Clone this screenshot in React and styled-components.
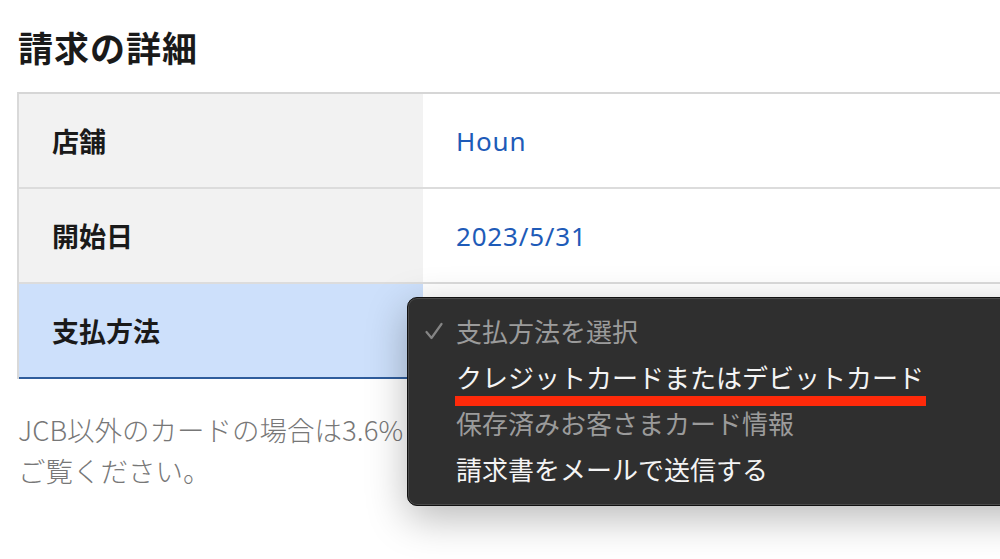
import React from 'react'
import styled, { createGlobalStyle } from 'styled-components'

const GlobalStyle = createGlobalStyle`
  html, body {
    margin: 0;
    padding: 0;
    background: #fff;
    overflow: hidden;
  }
  body {
    font-family: 'Noto Sans', 'Noto Sans CJK JP', sans-serif;
  }
`

const rows = [
  { id: 1, label: '店舗', value: 'Houn' },
  { id: 2, label: '開始日', value: '2023/5/31' },
  { id: 3, label: '支払方法', value: '', active: true },
]

const options = [
  { id: 1, text: '支払方法を選択', checked: true, muted: true },
  { id: 2, text: 'クレジットカードまたはデビットカード', marked: true },
  { id: 3, text: '保存済みお客さまカード情報', muted: true },
  { id: 4, text: '請求書をメールで送信する' },
]

const App = () => {
  return (
    <>
      <GlobalStyle />
      <Page>
        <Title>請求の詳細</Title>
        <Table>
          {rows.map((row) => (
            <Row key={row.id} active={row.active}>
              <Label active={row.active}>{row.label}</Label>
              <Value>
                {row.value}
                {row.active && (
                  <Menu>
                    {options.map((opt) => (
                      <Option key={opt.id} muted={opt.muted}>
                        <Check>
                          {opt.checked && (
                            <svg width="18" height="18" viewBox="0 0 18 18">
                              <polyline
                                points="1.5,10 6.5,16 16.5,2"
                                fill="none"
                                stroke="#858585"
                                strokeWidth="2.2"
                                strokeLinecap="round"
                                strokeLinejoin="round"
                              />
                            </svg>
                          )}
                        </Check>
                        <OptionText marked={opt.marked}>{opt.text}</OptionText>
                      </Option>
                    ))}
                  </Menu>
                )}
              </Value>
            </Row>
          ))}
        </Table>
        <Note>
          JCB以外のカードの場合は3.6%
          <br />
          ご覧ください。
        </Note>
      </Page>
    </>
  )
}

export default App

const Page = styled.div`
  padding: 24px 0 0 17px;
  width: 1000px;
  height: 559px;
  box-sizing: border-box;
  overflow: hidden;
`
const Title = styled.h2`
  margin: 0 0 22px 1px;
  font-family: 'Noto Sans CJK JP', sans-serif;
  font-size: 35px;
  font-weight: 700;
  line-height: 46px;
  color: #1a1a1a;
  letter-spacing: 1px;
`
const Table = styled.div`
  border-top: 2px solid #d6d6d6;
  border-left: 2px solid #d9d9d9;
  width: 1100px;
`
const Row = styled.div`
  display: grid;
  grid-template-columns: 404px 1fr;
  height: 95px;
  border-bottom: 2px solid ${({ active }) => (active ? '#2f5d9c' : '#dcdcdc')};
  box-sizing: border-box;
`
const Label = styled.div`
  display: flex;
  align-items: center;
  padding-left: 33px;
  background: ${({ active }) => (active ? '#cde0fb' : '#f2f2f2')};
  font-family: 'Noto Sans CJK JP', sans-serif;
  font-size: 27px;
  font-weight: 700;
  color: #1a1a1a;
`
const Value = styled.div`
  position: relative;
  display: flex;
  align-items: center;
  padding-left: 33px;
  background: #fff;
  font-family: 'Noto Sans', 'Noto Sans CJK JP', sans-serif;
  font-size: 26px;
  color: #1e5bb8;
  letter-spacing: 0.8px;
`
const Menu = styled.div`
  position: absolute;
  left: -16px;
  top: 13px;
  width: 640px;
  padding: 10px 0 13px;
  background: #2f2f2f;
  border: 1px solid #111;
  border-radius: 10px;
  box-shadow: inset 0 0 0 1px #4a4a4a, 0 12px 40px rgba(0, 0, 0, 0.28);
  z-index: 2;
  letter-spacing: 0;
`
const Option = styled.div`
  display: flex;
  align-items: center;
  height: 46px;
  padding-left: 17px;
  font-family: 'Noto Sans CJK JP', sans-serif;
  font-size: 26px;
  color: ${({ muted }) => (muted ? '#9b9b9b' : '#f4f4f4')};
`
const Check = styled.span`
  display: inline-flex;
  align-items: center;
  width: 31px;
  height: 20px;
`
const OptionText = styled.span`
  position: relative;
  line-height: 46px;
  &::after {
    content: '';
    display: ${({ marked }) => (marked ? 'block' : 'none')};
    position: absolute;
    left: -1px;
    right: -2px;
    bottom: -6px;
    height: 10px;
    background: #ff2a0a;
  }
`
const Note = styled.p`
  margin: 30px 0 0 1px;
  font-family: 'Noto Sans CJK JP', sans-serif;
  font-size: 27.5px;
  font-weight: 300;
  line-height: 41px;
  color: #777;
  white-space: nowrap;
`
